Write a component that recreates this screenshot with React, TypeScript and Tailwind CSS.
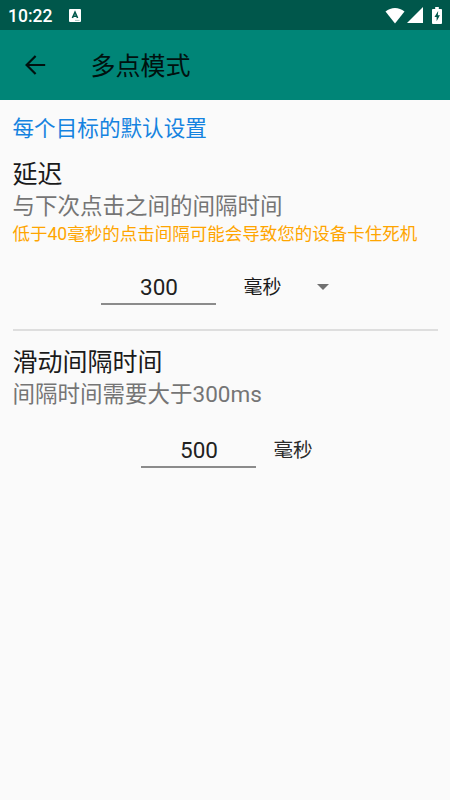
import { useState } from "react";

const StatusBar = () => (
  <div className="flex h-[30px] items-center bg-[#00574b] pl-2 pr-[8px] text-white">
    <span className="pt-px text-[17.5px] font-medium leading-[30px]">10:22</span>
    <svg className="ml-[17px] mt-px" width="12" height="13" viewBox="0 0 12 13">
      <rect width="12" height="13" rx="1" fill="#fff" />
      <path d="M3.4 9 6 3.2 8.6 9M4.2 7.2h3.6" fill="none" stroke="#00574b" strokeWidth="1.6" />
      <path d="M6 11.4h4.5" stroke="#8fb5af" strokeWidth="0.8" />
    </svg>
    <svg className="ml-auto" width="20" height="17" viewBox="0 0 20 17" fill="#fff">
      <path d="M0.5 4.6C6-0.3 14-0.3 19.5 4.6L10 16.4z" />
    </svg>
    <svg className="ml-[2px]" width="16" height="16" viewBox="0 0 16 16" fill="#fff">
      <path d="M0 16 16 0V16z" />
    </svg>
    <svg className="ml-[9px]" width="10" height="17" viewBox="0 0 11 18" preserveAspectRatio="none">
      <path d="M3.5 0h4v2H10a1 1 0 0 1 1 1v14a1 1 0 0 1-1 1H1a1 1 0 0 1-1-1V3a1 1 0 0 1 1-1h2.5z" fill="#fff" />
      <path d="M6.8 4.2 2.7 10.6h2.4v4.6l3.6-6.4H6.4z" fill="#00574b" />
    </svg>
  </div>
);

const Toolbar = () => (
  <header className="flex h-[70px] items-center bg-[#008577] pl-[25px]">
    <button type="button" aria-label="返回">
      <svg width="21" height="20" viewBox="0 0 21 20" fill="none" stroke="#00110f" strokeWidth="2.2">
        <path d="M20.2 10H2M10.6 1 1.6 10l9 9" />
      </svg>
    </button>
    <h1 className="ml-[44.5px] pt-[4px] text-[25px] leading-[36px] text-[#00110f]">多点模式</h1>
  </header>
);

type NumberFieldProps = {
  label: string;
  value: string;
  onChange: (value: string) => void;
};

const NumberField = ({ label, value, onChange }: NumberFieldProps) => (
  <input
    aria-label={label}
    inputMode="numeric"
    value={value}
    onChange={(e) => onChange(e.target.value)}
    className="h-[35px] w-[115px] border-b-2 border-[#8b8b8b] bg-transparent pl-[2px] text-center text-[22.5px] text-[#212121] outline-none"
  />
);

export default function App() {
  const [delay, setDelay] = useState("300");
  const [swipe, setSwipe] = useState("500");

  return (
    <div className="flex h-screen flex-col overflow-hidden bg-[#fafafa] font-['Roboto','Noto_Sans_CJK_SC',sans-serif]">
      <StatusBar />
      <Toolbar />
      <main className="flex-1 px-[12.5px] pt-[13px]">
        <p className="text-[21.6px] leading-[32px] text-[#1583e0]">每个目标的默认设置</p>

        <section className="mt-[12px]">
          <h2 className="text-[25px] leading-[36px] text-[#1a1a1a]">延迟</h2>
          <p className="-mt-px text-[22.5px] leading-[28px] text-[#757575]">与下次点击之间的间隔时间</p>
          <p className="text-[17.5px] leading-[28px] whitespace-nowrap text-[#ffa500]">
            低于40毫秒的点击间隔可能会导致您的设备卡住死机
          </p>
          <div className="mt-[22px] flex h-[36px] pl-[88px]">
            <NumberField label="延迟" value={delay} onChange={setDelay} />
            <button type="button" className="ml-7 flex h-[34px] items-center text-[19px] text-[#1a1a1a]">
              <span className="pt-[3px]">毫秒</span>
              <svg className="ml-[35px]" width="12" height="6" viewBox="0 0 12 6" fill="#707070">
                <path d="M0 0h12L6 6z" />
              </svg>
            </button>
          </div>
        </section>

        <hr className="mt-[23px] border-t-2 border-[#dedede]" />

        <section className="mt-[14px]">
          <h2 className="text-[25px] leading-[36px] text-[#1a1a1a]">滑动间隔时间</h2>
          <p className="-mt-px text-[22.5px] leading-[28px] text-[#757575]">间隔时间需要大于300ms</p>
          <div className="mt-[25px] flex h-[36px] pl-[128px]">
            <NumberField label="滑动间隔时间" value={swipe} onChange={setSwipe} />
            <span className="ml-[18px] pt-px text-[19.6px] leading-[34px] text-[#2a2a2a]">毫秒</span>
          </div>
        </section>
      </main>
    </div>
  );
}
